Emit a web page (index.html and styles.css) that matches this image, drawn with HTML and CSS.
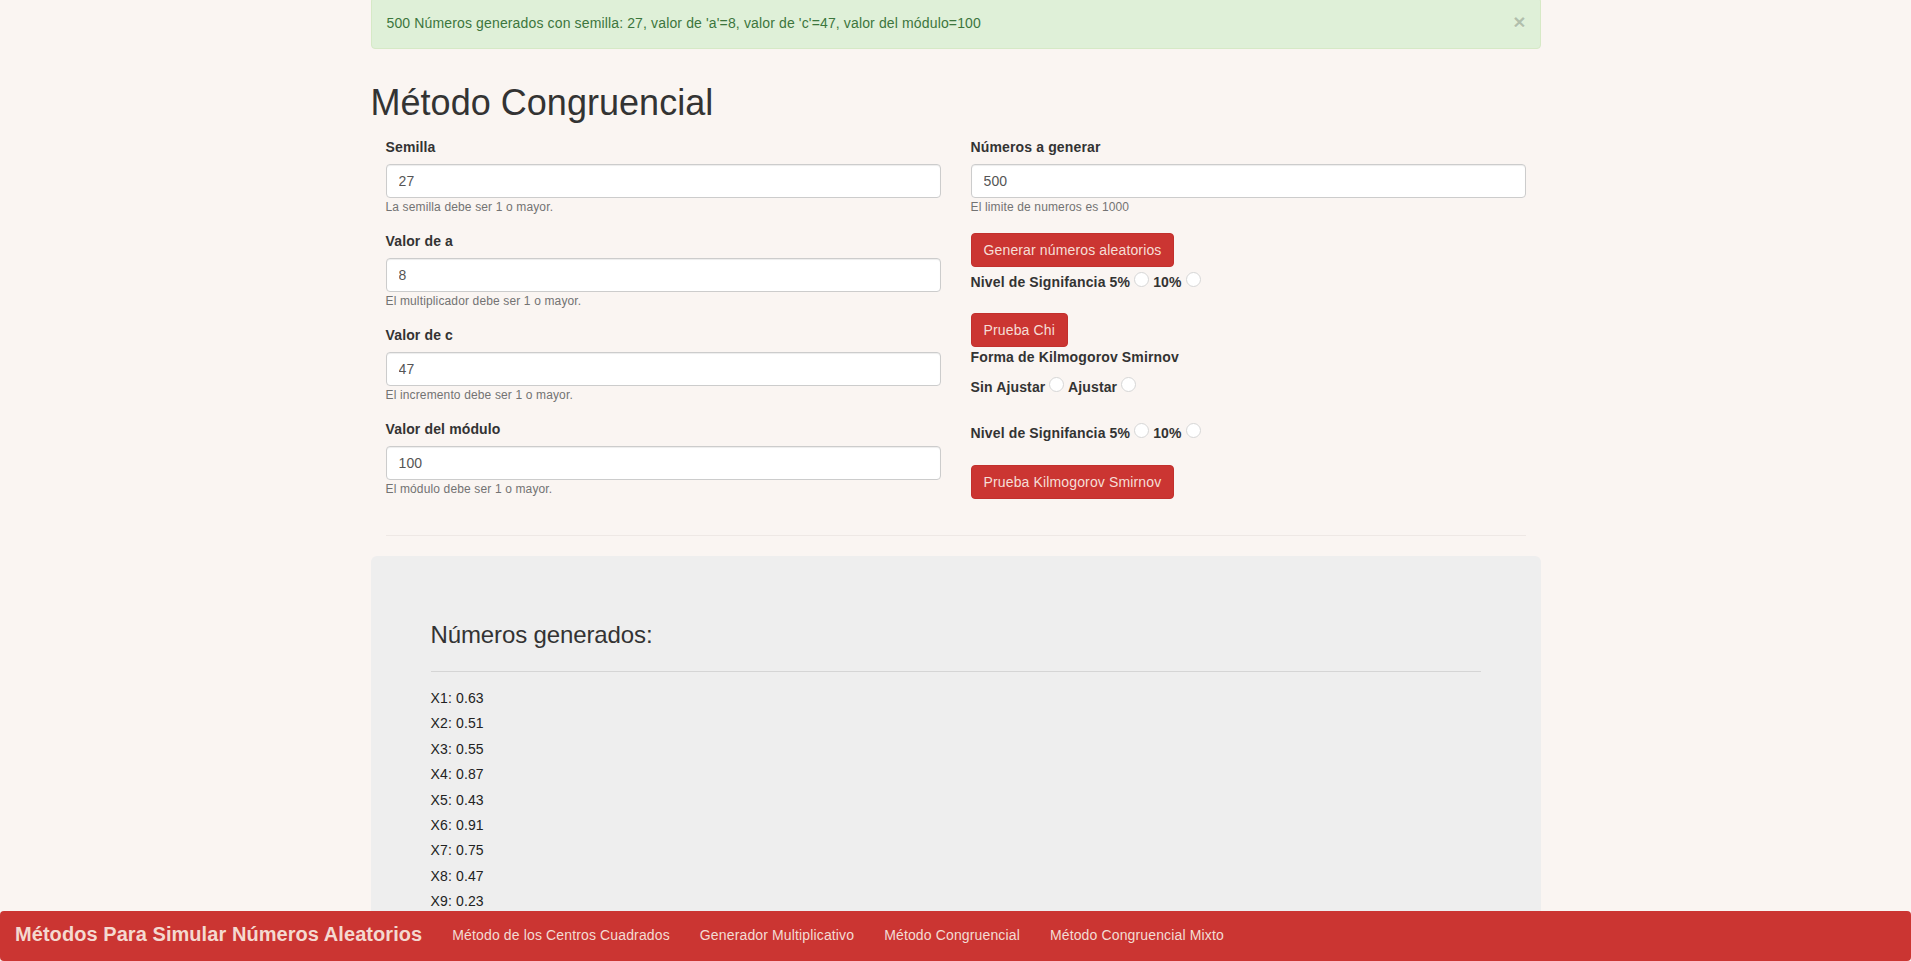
FILE: index.html
```html
<!DOCTYPE html>
<html lang="es">
<head>
<meta charset="utf-8">
<title>Método Congruencial</title>
<link rel="stylesheet" href="styles.css">
</head>
<body>
<div class="container">
  <div class="alert">500 Números generados con semilla: 27, valor de 'a'=8, valor de 'c'=47, valor del módulo=100<span class="close">×</span></div>

  <h1 class="title">Método Congruencial</h1>

  <div class="form-row">
    <div class="col">
      <div class="group">
        <label class="lbl">Semilla</label>
        <input class="field" type="text" value="27">
        <div class="help">La semilla debe ser 1 o mayor.</div>
      </div>
      <div class="group">
        <label class="lbl">Valor de a</label>
        <input class="field" type="text" value="8">
        <div class="help">El multiplicador debe ser 1 o mayor.</div>
      </div>
      <div class="group">
        <label class="lbl">Valor de c</label>
        <input class="field" type="text" value="47">
        <div class="help">El incremento debe ser 1 o mayor.</div>
      </div>
      <div class="group">
        <label class="lbl">Valor del módulo</label>
        <input class="field" type="text" value="100">
        <div class="help">El módulo debe ser 1 o mayor.</div>
      </div>
    </div>

    <div class="col">
      <div class="group group-right">
        <label class="lbl">Números a generar</label>
        <input class="field" type="text" value="500">
        <div class="help">El limite de numeros es 1000</div>
      </div>
      <button class="btn">Generar números aleatorios</button>
      <div class="radio-line rl-1">Nivel de Signifancia 5% <span class="radio"></span> 10% <span class="radio"></span></div>
      <button class="btn">Prueba Chi</button>
      <div class="sub-label">Forma de Kilmogorov Smirnov</div>
      <div class="radio-line rl-2">Sin Ajustar <span class="radio"></span> Ajustar <span class="radio"></span></div>
      <div class="radio-line rl-3">Nivel de Signifancia 5% <span class="radio"></span> 10% <span class="radio"></span></div>
      <button class="btn">Prueba Kilmogorov Smirnov</button>
    </div>
  </div>

  <hr class="sep">

  <div class="jumbo">
    <h3 class="jumbo-title">Números generados:</h3>
    <hr class="jumbo-rule">
    <div class="item">X1: 0.63</div>
    <div class="item">X2: 0.51</div>
    <div class="item">X3: 0.55</div>
    <div class="item">X4: 0.87</div>
    <div class="item">X5: 0.43</div>
    <div class="item">X6: 0.91</div>
    <div class="item">X7: 0.75</div>
    <div class="item">X8: 0.47</div>
    <div class="item">X9: 0.23</div>
  </div>
</div>

<nav class="navbar">
  <span class="brand">Métodos Para Simular Números Aleatorios</span>
  <a class="nav-link">Método de los Centros Cuadrados</a>
  <a class="nav-link">Generador Multiplicativo</a>
  <a class="nav-link">Método Congruencial</a>
  <a class="nav-link">Método Congruencial Mixto</a>
</nav>
</body>
</html>
```

FILE: styles.css
```css
html, body {
  overflow: hidden;
}

body {
  margin: 0;
  background: #faf5f2;
  font-family: "Liberation Sans", Arial, Helvetica, sans-serif;
  font-size: 14px;
  line-height: 20px;
  letter-spacing: 0.14px;
  color: #333;
}

.container {
  width: 1170px;
  margin: 0 auto;
}

/* alert */
.alert {
  position: relative;
  margin-top: -3px;
  padding: 15px 35px 15px 15px;
  border: 1px solid #d6e9c6;
  border-radius: 4px;
  background: #dff0d8;
  color: #3c763d;
}

.close {
  position: absolute;
  top: 13px;
  right: 14px;
  font-size: 21px;
  font-weight: bold;
  line-height: 21px;
  letter-spacing: 0;
  color: #000;
  opacity: 0.2;
  text-shadow: 0 1px 0 #fff;
}

/* title */
.title {
  margin: 34px 0 14.5px;
  font-size: 36px;
  font-weight: normal;
  line-height: 39.6px;
  letter-spacing: 0.03px;
  color: #333;
}

/* form */
.form-row {
  display: grid;
  grid-template-columns: 1fr 1fr;
  column-gap: 30px;
  padding: 0 15px;
}

.group {
  margin-bottom: 15px;
}

.group-right {
  margin-bottom: 17px;
}

.lbl {
  display: block;
  margin-bottom: 7px;
  font-weight: bold;
  line-height: 20px;
}

.field {
  display: block;
  box-sizing: border-box;
  width: 100%;
  height: 34px;
  margin: 0;
  padding: 6px 12px;
  font-family: "Liberation Sans", Arial, Helvetica, sans-serif;
  font-size: 14px;
  line-height: 20px;
  letter-spacing: 0.14px;
  color: #555;
  background: #fff;
  border: 1px solid #ccc;
  border-radius: 4px;
  box-shadow: inset 0 1px 1px rgba(0, 0, 0, 0.075);
  outline: none;
}

.help {
  font-size: 12px;
  line-height: 18px;
  color: #737373;
}

.btn {
  display: block;
  width: max-content;
  box-sizing: border-box;
  height: 34px;
  margin: 0;
  padding: 6px 12px;
  font-family: "Liberation Sans", Arial, Helvetica, sans-serif;
  font-size: 14px;
  line-height: 20px;
  letter-spacing: 0.14px;
  color: #f6ded6;
  background: #cb3532;
  border: 1px solid #c2302d;
  border-radius: 4px;
}

.radio-line {
  font-weight: bold;
  line-height: 20px;
}

.rl-1 { margin-bottom: 21px; }
.rl-2 { margin-bottom: 21px; }
.rl-3 { margin-bottom: 21.5px; }

.radio {
  display: inline-block;
  box-sizing: border-box;
  width: 15px;
  height: 15px;
  margin-top: 5px;
  border: 1px solid #d6d6d6;
  border-radius: 50%;
  background: #fff;
}

.sub-label {
  margin-bottom: 5px;
  font-weight: bold;
  line-height: 20px;
}

/* separator */
.sep {
  margin: 22px 15px 20px;
  border: 0;
  border-top: 1px solid #eee8e5;
}

/* results panel */
.jumbo {
  padding: 48px 60px;
  background: #eee;
  border-radius: 6px;
}

.jumbo-title {
  margin: 17.5px 0 0;
  font-size: 24px;
  font-weight: normal;
  line-height: 26.4px;
  letter-spacing: -0.12px;
  color: #333;
}

.jumbo-rule {
  margin: 23px 0 14px;
  border: 0;
  border-top: 1px solid #d5d5d5;
}

.item {
  line-height: 25.4px;
  color: #222;
}

/* bottom navbar */
.navbar {
  position: fixed;
  left: 0;
  right: 0;
  bottom: 0;
  height: 50px;
  display: flex;
  align-items: flex-start;
  background: #cb3532;
  border-radius: 4px;
}

.brand {
  padding: 12.5px 15px 0;
  font-size: 20px;
  font-weight: bold;
  line-height: 20px;
  letter-spacing: 0.06px;
  color: #f4d9d0;
}

.nav-link {
  padding: 14px 15px 0;
  font-size: 14px;
  line-height: 20px;
  color: #f3dcd4;
}
```
